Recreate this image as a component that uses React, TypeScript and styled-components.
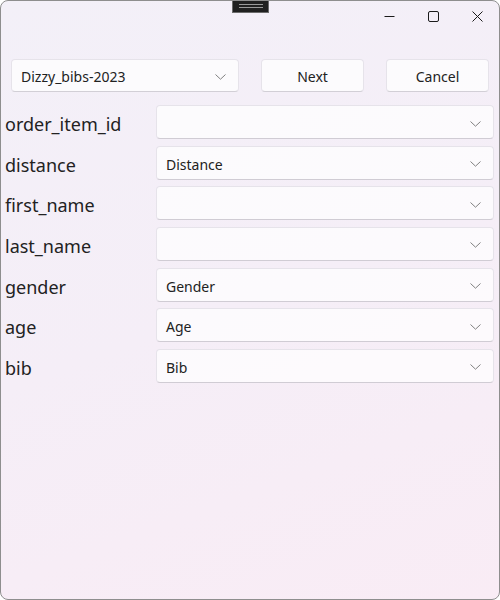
import React, { FC } from "react";
import styled, { createGlobalStyle } from "styled-components";

const GlobalStyle = createGlobalStyle`
  html, body {
    margin: 0;
    padding: 0;
    background: #ffffff;
  }
  * {
    box-sizing: border-box;
  }
`;

const Window = styled.div`
  position: relative;
  width: 500px;
  height: 600px;
  border: 1px solid #8e8e8e;
  border-radius: 8px;
  overflow: hidden;
  background: linear-gradient(160deg, #f3f0f8 0%, #f5eef7 50%, #f9ecf5 100%);
  font-family: "Noto Sans", "Open Sans", sans-serif;
  color: #222222;
  display: flex;
  flex-direction: column;
`;

const Handle = styled.div`
  position: absolute;
  top: -1px;
  left: 231px;
  width: 37px;
  height: 13px;
  background: #202020;
  border: 1px solid #6b6b6b;
  border-top: none;
  display: flex;
  flex-direction: column;
  align-items: center;
  justify-content: center;
  gap: 2px;
  &::before,
  &::after {
    content: "";
    display: block;
    width: 24px;
    height: 1px;
    background: #9a9a9a;
  }
`;

const TitleBar = styled.div`
  height: 30px;
  display: flex;
  justify-content: flex-end;
`;

const CaptionButton = styled.div`
  width: 44px;
  height: 30px;
  display: flex;
  align-items: center;
  justify-content: center;
`;

const Toolbar = styled.div`
  margin-top: 28px;
  padding: 0 10px;
  display: flex;
  gap: 22px;
  height: 33px;
`;

const ToolCombo = styled.div`
  width: 228px;
  height: 33px;
  display: flex;
  align-items: center;
  justify-content: space-between;
  padding: 2px 12px 0 9px;
  background: rgba(255, 255, 255, 0.75);
  border: 1px solid #e6e3ea;
  border-bottom-color: #d2cfd6;
  border-radius: 4px;
  font-size: 14px;
`;

const Button = styled.div`
  width: 103px;
  height: 33px;
  display: flex;
  align-items: center;
  justify-content: center;
  padding-top: 1px;
  background: rgba(255, 255, 255, 0.75);
  border: 1px solid #e6e3ea;
  border-bottom-color: #d2cfd6;
  border-radius: 4px;
  font-size: 14px;
`;

const Form = styled.div`
  margin-top: 13px;
  padding: 0 5px 0 4px;
  display: grid;
  grid-template-columns: 151px 1fr;
  grid-auto-rows: 34px;
  row-gap: 6.67px;
`;

const Label = styled.div`
  display: flex;
  align-items: center;
  font-size: 18px;
  padding-top: 4px;
  color: #222222;
`;

const Field = styled.div`
  display: flex;
  align-items: center;
  justify-content: space-between;
  padding: 3px 12px 0 9px;
  background: rgba(255, 255, 255, 0.72);
  border: 1px solid #e6e3ea;
  border-bottom-color: #d0ccd4;
  border-radius: 4px;
  font-size: 14px;
`;

const Chevron: FC = () => (
  <svg width="11" height="6" viewBox="0 0 11 6">
    <path d="M0.5 0.5 L5.5 5.2 L10.5 0.5" fill="none" stroke="#808080" strokeWidth="1" />
  </svg>
);

const rows: { name: string; value: string }[] = [
  { name: "order_item_id", value: "" },
  { name: "distance", value: "Distance" },
  { name: "first_name", value: "" },
  { name: "last_name", value: "" },
  { name: "gender", value: "Gender" },
  { name: "age", value: "Age" },
  { name: "bib", value: "Bib" },
];

const App: FC = () => {
  return (
    <>
      <GlobalStyle />
      <Window>
        <Handle />
        <TitleBar>
          <CaptionButton>
            <svg width="11" height="11" viewBox="0 0 11 11">
              <path d="M0.5 5.5 H10.5" stroke="#1b1b1b" strokeWidth="1" />
            </svg>
          </CaptionButton>
          <CaptionButton>
            <svg width="11" height="11" viewBox="0 0 11 11">
              <rect x="0.5" y="0.5" width="10" height="10" rx="1.5" fill="none" stroke="#1b1b1b" strokeWidth="1" />
            </svg>
          </CaptionButton>
          <CaptionButton>
            <svg width="11" height="11" viewBox="0 0 11 11">
              <path d="M0.5 0.5 L10.5 10.5 M10.5 0.5 L0.5 10.5" stroke="#1b1b1b" strokeWidth="1" />
            </svg>
          </CaptionButton>
        </TitleBar>
        <Toolbar>
          <ToolCombo>
            <span>Dizzy_bibs-2023</span>
            <Chevron />
          </ToolCombo>
          <Button>Next</Button>
          <Button>Cancel</Button>
        </Toolbar>
        <Form>
          {rows.map((row) => (
            <React.Fragment key={row.name}>
              <Label>{row.name}</Label>
              <Field>
                <span>{row.value}</span>
                <Chevron />
              </Field>
            </React.Fragment>
          ))}
        </Form>
      </Window>
    </>
  );
};

export default App;
